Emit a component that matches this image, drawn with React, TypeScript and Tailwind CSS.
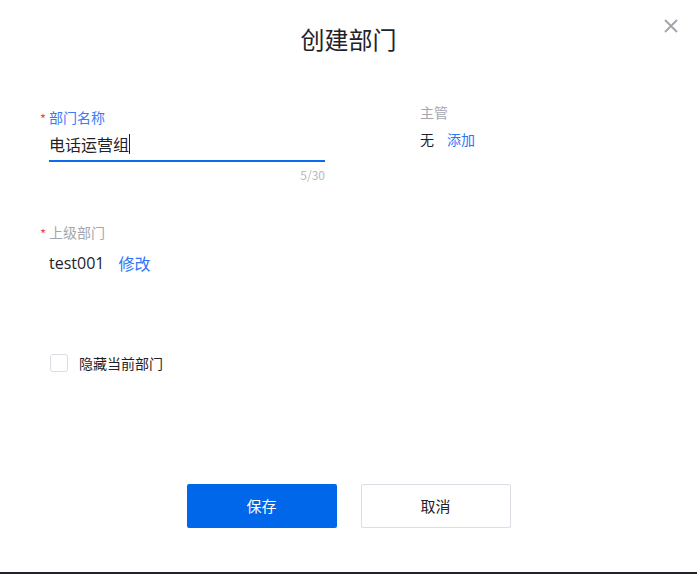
import React from "react";

export default function App() {
  const font = { fontFamily: '"Noto Sans CJK SC", "Noto Sans", sans-serif' };
  return (
    <div className="w-[697px] h-[574px] bg-white flex flex-col relative" style={font}>
      <div className="flex-1 flex flex-col">
        <div className="h-[80px] flex items-center justify-center pb-[2px]">
          <h1 className="text-[24px] leading-none text-[#1f2329]">创建部门</h1>
        </div>
        <button className="absolute right-[18px] top-[18px] text-[#a0a3aa]">
          <svg width="16" height="16" viewBox="0 0 16 16" fill="none" stroke="currentColor" strokeWidth="1.8">
            <path d="M2 2L14 14M14 2L2 14" />
          </svg>
        </button>
        <div className="flex pl-[40px] pt-[27px]">
          <div className="w-[285px]">
            <div className="flex items-center h-[20px]">
              <span className="w-[9px] text-[13px] text-[#f5483b] leading-none mt-[2px]">*</span>
              <span className="text-[14px] text-[#3a7bf7] leading-none">部门名称</span>
            </div>
            <div className="ml-[9px] mt-[1px] h-[34px] flex items-center border-b-2 border-[#0b6cf0]">
              <span className="text-[16px] text-[#1f2329] leading-none">电话运营组</span>
              <span className="w-px h-[20px] bg-[#1f2329]" />
            </div>
            <div className="text-right text-[12px] text-[#b7b9be] mt-[7px] leading-none">5/30</div>
          </div>
          <div className="ml-[95px] -mt-[5px]">
            <div className="text-[14px] text-[#a5a7ad] leading-none h-[20px] flex items-center">主管</div>
            <div className="flex items-center mt-[7px] text-[14px] leading-none h-[20px]">
              <span className="text-[#1f2329]">无</span>
              <span className="ml-[13px] text-[#2f74f7]">添加</span>
            </div>
          </div>
        </div>
        <div className="pl-[40px] mt-[41px]">
          <div className="flex items-center h-[20px]">
            <span className="w-[9px] text-[13px] text-[#f5483b] leading-none mt-[2px]">*</span>
            <span className="text-[14px] text-[#a5a7ad] leading-none">上级部门</span>
          </div>
          <div className="ml-[9px] mt-[11px] flex items-center h-[20px] leading-none">
            <span className="text-[16px] text-[#1f2329]" style={{ fontFamily: '"Open Sans", "Noto Sans", sans-serif' }}>test001</span>
            <span className="ml-[14px] text-[16px] text-[#2f74f7]">修改</span>
          </div>
        </div>
        <div className="pl-[50px] mt-[81px] flex items-center">
          <span className="w-[18px] h-[18px] rounded-[3px] border border-[#dcdde3] bg-white" />
          <span className="ml-[11px] text-[14px] text-[#1f2329] leading-none">隐藏当前部门</span>
        </div>
        <div className="mt-[112px] flex justify-center gap-[24px]">
          <button className="w-[150px] h-[44px] rounded-[2px] bg-[#0067eb] text-white text-[15px]">保存</button>
          <button className="w-[150px] h-[44px] rounded-[2px] border border-[#dcdee6] bg-white text-[#1f2329] text-[15px]">取消</button>
        </div>
      </div>
      <div className="h-[2px] bg-[#1f2329]" />
    </div>
  );
}
